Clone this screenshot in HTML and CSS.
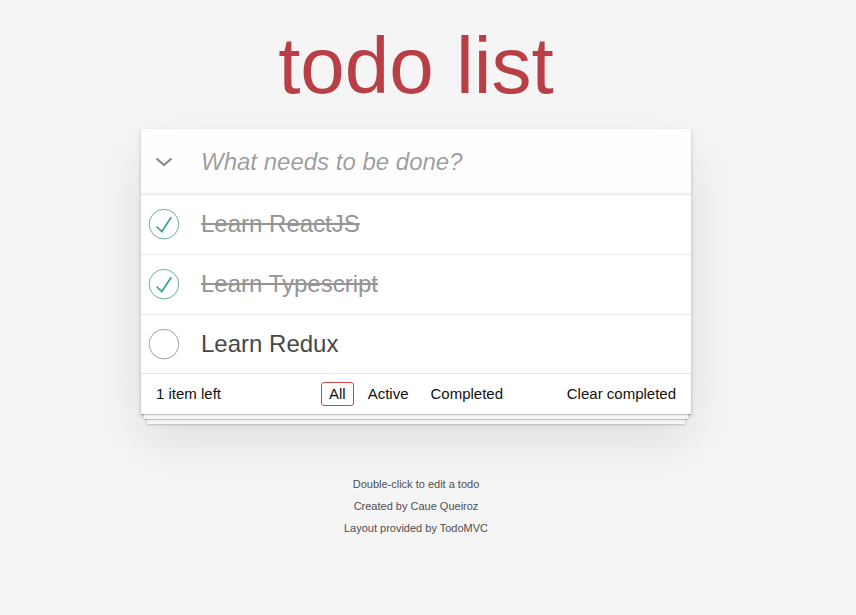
FILE: index.html
```html
<!DOCTYPE html>
<html lang="en">
<head>
<meta charset="utf-8">
<title>todo list</title>
<link rel="stylesheet" href="styles.css">
</head>
<body>
<div class="page">
  <h1 class="title">todo list</h1>
  <section class="todoapp">
    <header class="header">
      <div class="toggle-all">
        <svg width="18" height="10" viewBox="0 0 18 10"><polyline points="1.5,1.5 9,8 16.5,1.5" fill="none" stroke="#8a8a8a" stroke-width="2.2" stroke-linejoin="miter"/></svg>
      </div>
      <input class="new-todo" placeholder="What needs to be done?">
    </header>
    <ul class="todo-list">
      <li class="todo completed">
        <svg class="toggle" width="40" height="40" viewBox="-10 -18 100 135"><circle cx="50" cy="50" r="50" fill="none" stroke="#59A193" stroke-width="3"/><path fill="#3EA390" d="M72 25L42 71 27 56l-4 4 20 20 34-52z"/></svg>
        <label class="label">Learn ReactJS</label>
      </li>
      <li class="todo completed">
        <svg class="toggle" width="40" height="40" viewBox="-10 -18 100 135"><circle cx="50" cy="50" r="50" fill="none" stroke="#59A193" stroke-width="3"/><path fill="#3EA390" d="M72 25L42 71 27 56l-4 4 20 20 34-52z"/></svg>
        <label class="label">Learn Typescript</label>
      </li>
      <li class="todo">
        <svg class="toggle" width="40" height="40" viewBox="-10 -18 100 135"><circle cx="50" cy="50" r="50" fill="none" stroke="#949494" stroke-width="3"/></svg>
        <label class="label">Learn Redux</label>
      </li>
    </ul>
    <footer class="footer">
      <span class="todo-count"><strong>1</strong> item left</span>
      <ul class="filters">
        <li><a class="selected">All</a></li>
        <li><a>Active</a></li>
        <li><a>Completed</a></li>
      </ul>
      <span class="clear-completed">Clear completed</span>
    </footer>
  </section>
  <footer class="info">
    <p>Double-click to edit a todo</p>
    <p>Created by Caue Queiroz</p>
    <p>Layout provided by TodoMVC</p>
  </footer>
</div>
</body>
</html>
```
FILE: styles.css
```css
html, body {
  margin: 0;
  padding: 0;
}
body {
  background: #f5f5f5;
  font-family: "Liberation Sans", Arial, Helvetica, sans-serif;
  font-size: 14px;
  line-height: 1.4em;
  color: #111;
}
.page {
  width: 832px;
}
.title {
  margin: 26px 0 23px;
  font-size: 80px;
  line-height: 80px;
  font-weight: normal;
  text-align: center;
  color: #b83f45;
}
.todoapp {
  width: 550px;
  margin: 0 auto 40px;
  background: #fff;
  box-shadow: 0 2px 4px 0 rgba(0,0,0,0.2), 0 25px 50px 0 rgba(0,0,0,0.1);
}
.header {
  display: flex;
  align-items: center;
  height: 65px;
  background: rgba(0,0,0,0.003);
  box-shadow: inset 0 -2px 1px rgba(0,0,0,0.03);
}
.toggle-all {
  width: 60px;
  height: 65px;
  flex: none;
  display: flex;
  align-items: center;
  justify-content: center;
  box-sizing: border-box;
  padding: 1px 15px 0 0;
}
.toggle-all svg {
  display: block;
}
.new-todo {
  flex: 1;
  min-width: 0;
  height: 65px;
  box-sizing: border-box;
  padding: 16px 16px 16px 0;
  border: none;
  outline: none;
  background: transparent;
  font-family: inherit;
  font-size: 24px;
  line-height: 1.4em;
  color: inherit;
}
.new-todo::placeholder {
  font-style: italic;
  color: rgba(0,0,0,0.4);
}
.todo-list {
  margin: 0;
  padding: 0;
  list-style: none;
  border-top: 1px solid #e6e6e6;
}
.todo {
  display: flex;
  align-items: center;
  border-bottom: 1px solid #ededed;
  font-size: 24px;
}
.todo:last-child {
  border-bottom: none;
}
.toggle {
  flex: none;
  display: block;
}
.label {
  padding: 15px 15px 15px 20px;
  line-height: 1.2;
  color: #484848;
  word-break: break-all;
}
.completed .label {
  color: #949494;
  text-decoration: line-through;
}
.footer {
  display: grid;
  grid-template-columns: 1fr auto 1fr;
  align-items: center;
  box-sizing: border-box;
  height: 41px;
  padding: 0 15px;
  font-size: 15px;
  line-height: 18px;
  color: #111;
  border-top: 1px solid #e6e6e6;
  box-shadow: 0 1px 1px rgba(0,0,0,0.2), 0 8px 0 -3px #f6f6f6, 0 9px 1px -3px rgba(0,0,0,0.2), 0 16px 0 -6px #f6f6f6, 0 17px 2px -6px rgba(0,0,0,0.2);
}
.todo-count {
  text-align: left;
}
.todo-count strong {
  font-weight: 300;
}
.filters {
  display: flex;
  margin: 0;
  padding: 0;
  list-style: none;
}
.filters a {
  display: block;
  margin: 0 3px;
  padding: 3px 7px;
  line-height: 16px;
  border: 1px solid transparent;
  border-radius: 3px;
  color: inherit;
}
.filters a.selected {
  border-color: #ce4646;
}
.clear-completed {
  text-align: right;
}
.info {
  margin: 65px auto 0;
  color: #4d4d4d;
  font-size: 11px;
  text-shadow: 0 1px 0 rgba(255,255,255,0.5);
  text-align: center;
}
.info p {
  margin: 11px 0;
  line-height: 1;
}
.info p:first-child {
  margin-top: 0;
}
```
